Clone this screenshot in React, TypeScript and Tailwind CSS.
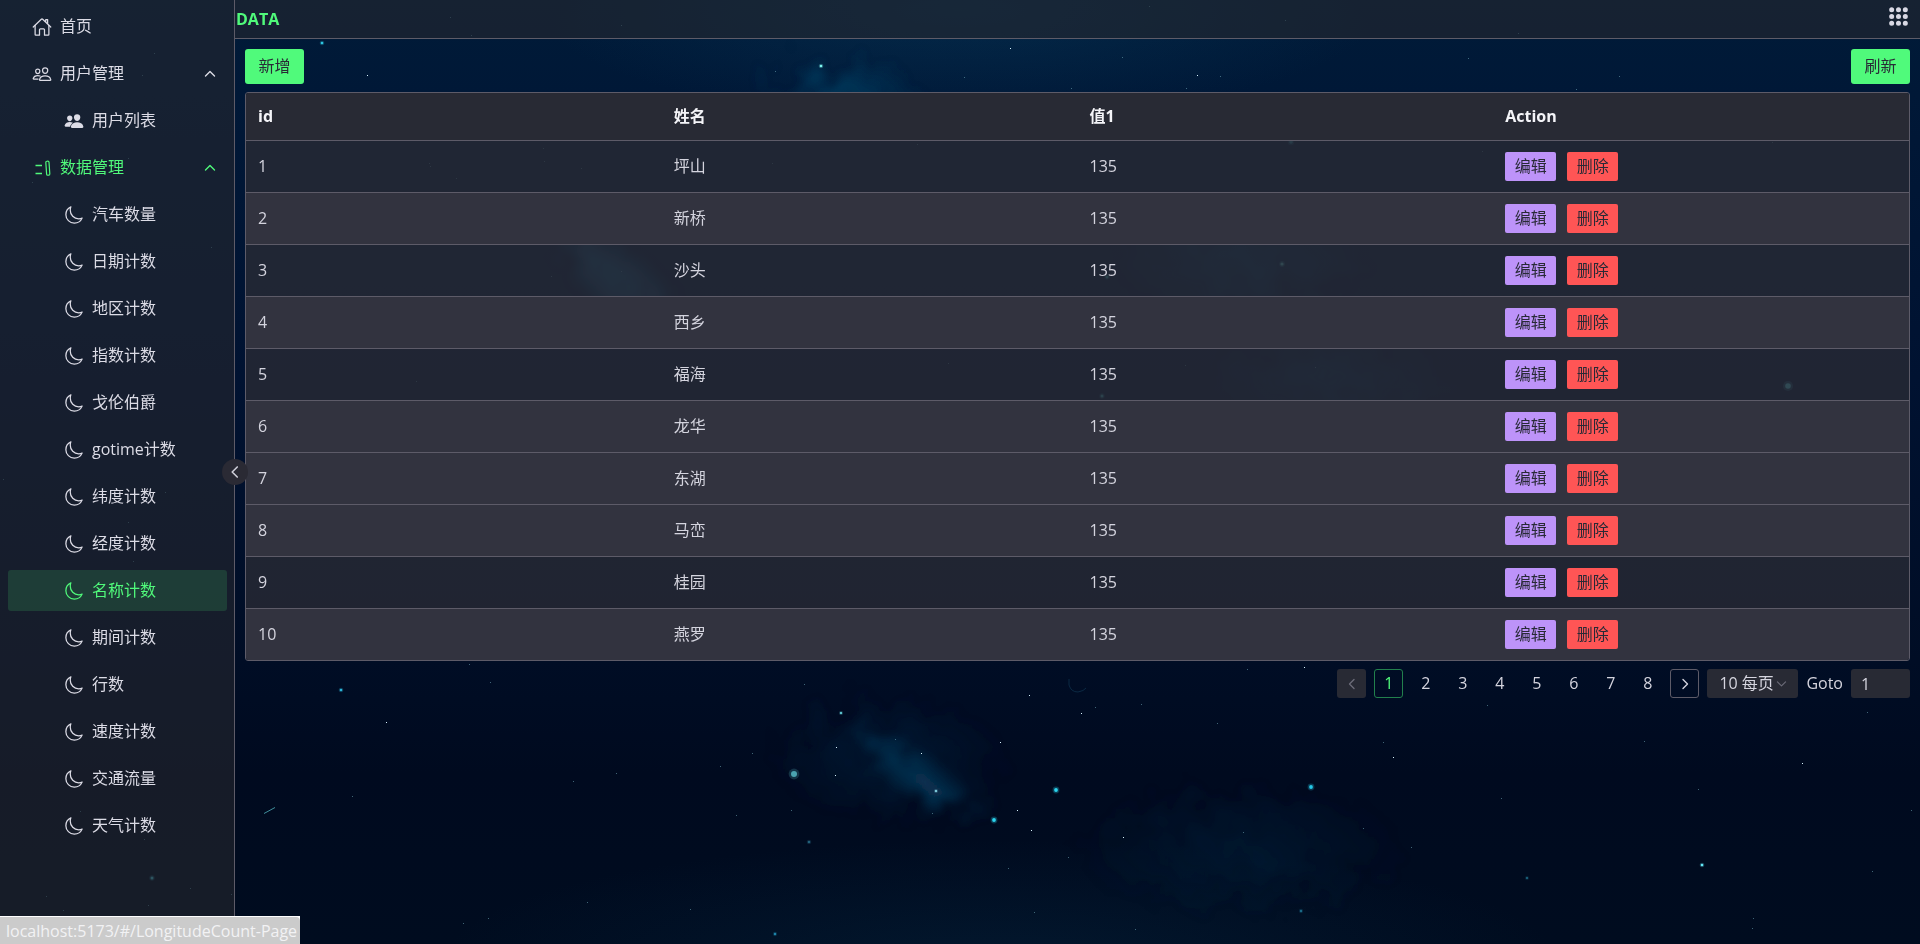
import { useState } from "react";
import type { ReactNode } from "react";
import {
  IoApps,
  IoHomeOutline,
  IoMoonOutline,
  IoPeople,
  IoPeopleOutline,
} from "react-icons/io5";

const counters = [
  "汽车数量",
  "日期计数",
  "地区计数",
  "指数计数",
  "戈伦伯爵",
  "gotime计数",
  "纬度计数",
  "经度计数",
  "名称计数",
  "期间计数",
  "行数",
  "速度计数",
  "交通流量",
  "天气计数",
];

const names = ["坪山", "新桥", "沙头", "西乡", "福海", "龙华", "东湖", "马峦", "桂园", "燕罗"];
const solidRows = new Set([2, 4, 6, 7, 8, 10]);
const columns = ["id", "姓名", "值1", "Action"];
const pages = [1, 2, 3, 4, 5, 6, 7, 8];

// x, y, radius, colour
type Star = [number, number, number, string];
const brightStars: Star[] = [
  [322, 43, 1.3, "#2cc4e0"],
  [341, 690, 1.3, "#2cb4d8"],
  [821, 66, 1.3, "#7df5f0"],
  [841, 713, 1.1, "#6be0e8"],
  [794, 774, 3, "#4aa3b0"],
  [994, 820, 1.9, "#2bd4ee"],
  [1056, 790, 1.9, "#2bd4ee"],
  [1311, 787, 1.9, "#25c8e8"],
  [1702, 865, 1.3, "#63e6f5"],
  [775, 934, 1.2, "#1f87ad"],
  [1301, 911, 1.2, "#1b6c8a"],
  [809, 842, 1.3, "#22607a"],
  [1527, 878, 1.1, "#1d6a85"],
  [1282, 264, 1.6, "#4fb5b8"],
  [1107, 277, 1.5, "#3b9aa5"],
  [1102, 396, 1.5, "#3b9aa5"],
  [1788, 386, 2.8, "#4fc0cc"],
  [1291, 142, 1.8, "#2b7f92"],
  [152, 878, 1.5, "#3e9db0"],
  [936, 791, 1.1, "#8fe3f2"],
];

const whiteStars: [number, number][] = [
  [367, 75], [386, 722], [1010, 48], [1081, 713], [1197, 75], [836, 747],
  [835, 775], [1393, 757], [1304, 667], [921, 753], [1017, 810], [1031, 830],
  [1123, 837], [1029, 695], [1000, 742], [1802, 763],
];

const dimStars: [number, number][] = [
  [1122, 57], [1071, 88], [1186, 88], [964, 77], [775, 71], [772, 163], [917, 144],
  [1149, 6], [1285, 20], [450, 17], [471, 35], [429, 163], [456, 178], [621, 25],
  [1468, 58], [1576, 89], [1619, 76], [1518, 33], [1220, 76], [621, 271], [551, 276],
  [948, 363], [1315, 367], [1185, 365], [416, 381], [154, 53], [142, 75], [128, 158],
  [32, 182], [3, 479], [211, 247], [165, 492], [128, 522], [133, 561], [103, 546],
  [463, 923], [469, 664], [490, 682], [573, 781], [616, 773], [720, 766], [736, 815],
  [587, 902], [690, 909], [488, 918], [352, 796], [1217, 723], [1243, 832],
  [1135, 929], [1034, 912], [895, 739], [752, 753], [804, 684], [1247, 669],
  [1141, 704], [1095, 707], [1068, 857], [1008, 868], [791, 810], [932, 813],
  [1752, 928], [1753, 918], [1501, 798], [1363, 828], [1411, 847], [1383, 742],
  [1487, 705], [1867, 712], [1872, 871], [1644, 741], [1698, 789], [1911, 810],
  [80, 811], [144, 839], [190, 888], [231, 894], [46, 896], [63, 910], [148, 905],
  [430, 166], [543, 148], [544, 161], [581, 168], [1482, 151], [1772, 142],
];

function NightSky() {
  return (
    <svg
      className="absolute inset-0 h-full w-full"
      viewBox="0 0 1920 944"
      preserveAspectRatio="none"
      aria-hidden="true"
    >
      <defs>
        <linearGradient id="sky" x1="0" y1="0" x2="0" y2="1">
          <stop offset="0" stopColor="#001b38" />
          <stop offset="0.1" stopColor="#001837" />
          <stop offset="0.4" stopColor="#001231" />
          <stop offset="0.7" stopColor="#000d25" />
          <stop offset="0.82" stopColor="#000a1f" />
          <stop offset="1" stopColor="#000c1f" />
        </linearGradient>
        <radialGradient id="glow">
          <stop offset="0" stopColor="#0b4468" stopOpacity="1" />
          <stop offset="1" stopColor="#0b4468" stopOpacity="0" />
        </radialGradient>
        <filter id="cloud" x="-30%" y="-30%" width="160%" height="160%">
          <feTurbulence type="fractalNoise" baseFrequency="0.04" numOctaves="5" seed="7" result="noise" />
          <feDisplacementMap in="SourceGraphic" in2="noise" scale="60" />
          <feGaussianBlur stdDeviation="3" />
        </filter>
      </defs>
      <rect width="1920" height="944" fill="url(#sky)" />
      <ellipse cx="960" cy="10" rx="420" ry="110" fill="url(#glow)" opacity="0.35" />
      <ellipse cx="1000" cy="960" rx="560" ry="120" fill="url(#glow)" opacity="0.2" />
      <g filter="url(#cloud)">
        <ellipse cx="845" cy="98" rx="80" ry="42" fill="url(#glow)" opacity="0.7" />
        <ellipse cx="618" cy="280" rx="75" ry="38" fill="url(#glow)" transform="rotate(38 618 280)" />
        <ellipse cx="618" cy="280" rx="60" ry="28" fill="url(#glow)" transform="rotate(38 618 280)" />
        <ellipse cx="1240" cy="260" rx="130" ry="60" fill="url(#glow)" opacity="0.5" />
        <ellipse cx="1330" cy="380" rx="120" ry="50" fill="url(#glow)" opacity="0.4" />
        <ellipse cx="920" cy="778" rx="75" ry="26" fill="url(#glow)" opacity="0.65" transform="rotate(34 920 778)" />
        <ellipse cx="890" cy="760" rx="120" ry="65" fill="url(#glow)" opacity="0.25" />
        <ellipse cx="1240" cy="850" rx="170" ry="65" fill="url(#glow)" opacity="0.2" />
      </g>
      {dimStars.map(([x, y]) => (
        <rect key={`${x}-${y}`} x={x} y={y} width="1" height="1" fill="#6aa2b0" opacity="0.6" />
      ))}
      {whiteStars.map(([x, y]) => (
        <rect key={`${x}-${y}`} x={x} y={y} width="1" height="1" fill="#d8f4ff" />
      ))}
      {brightStars.map(([x, y, r, fill]) => (
        <g key={`${x}-${y}`} fill={fill}>
          <circle cx={x} cy={y} r={r * 1.8} opacity="0.25" />
          <circle cx={x} cy={y} r={r} />
        </g>
      ))}
      <path d="M264 813.500L275 807.500" stroke="#3f8f9c" strokeWidth="1" />
      <path d="M1069 679V685Q1071 692 1078 692Q1084 691 1086 688" fill="none" stroke="#0b2a44" strokeWidth="1" />
    </svg>
  );
}

function DataIcon() {
  return (
    <svg className="size-5 shrink-0" viewBox="0 0 20 20" fill="none" stroke="currentColor" aria-hidden="true">
      <path d="M3.500 7.500H10M3.500 15.500H10" strokeWidth="1.300" />
      <rect x="14.200" y="3.200" width="3.200" height="14" rx="1.200" strokeWidth="1.200" transform="rotate(-4 16 10)" />
    </svg>
  );
}

function Chevron({ d, className }: { d: string; className: string }) {
  return (
    <svg
      className={className}
      viewBox="0 0 16 16"
      fill="none"
      stroke="currentColor"
      strokeWidth="1.400"
      strokeLinecap="round"
      strokeLinejoin="round"
      aria-hidden="true"
    >
      <path d={d} />
    </svg>
  );
}

const UP = "M3.500 10L8 5.500L12.500 10";
const DOWN = "M3 6L8 11L13 6";
const LEFT = "M10 3.500L5.500 8L10 12.500";
const RIGHT = "M6 3.500L10.500 8L6 12.500";

function MenuGroup({ icon, label, active }: { icon: ReactNode; label: string; active?: boolean }) {
  return (
    <button
      type="button"
      aria-expanded="true"
      className={`flex h-[41px] w-full items-center gap-2 rounded-[3px] pr-[9px] pl-6 text-left ${
        active ? "text-[#50fa7b]" : "text-[#dcdce6]"
      }`}
    >
      {icon}
      <span className="flex-1 pb-0.5">{label}</span>
      <Chevron d={UP} className="size-4" />
    </button>
  );
}

function MenuLink({
  icon,
  label,
  nested,
  active,
}: {
  icon: ReactNode;
  label: string;
  nested?: boolean;
  active?: boolean;
}) {
  return (
    <a
      href="#"
      aria-current={active ? "page" : undefined}
      className={`flex h-[41px] items-center gap-2 rounded-[3px] ${nested ? "pl-14" : "pl-6"} ${
        active ? "bg-[#50fa7b]/15 text-[#50fa7b]" : "text-[#dcdce6]"
      }`}
    >
      {icon}
      <span className="pb-0.5">{label}</span>
    </a>
  );
}

function Sidebar() {
  return (
    <aside className="relative w-[235px] shrink-0 border-r border-[#5d5b68] bg-[#24262f]/62">
      <nav className="flex flex-col gap-1.5 px-2 pt-1.5 pr-[7px]">
        <MenuLink icon={<IoHomeOutline className="size-5" />} label="首页" />
        <MenuGroup icon={<IoPeopleOutline className="size-5" />} label="用户管理" />
        <MenuLink icon={<IoPeople className="size-5" />} label="用户列表" nested />
        <MenuGroup icon={<DataIcon />} label="数据管理" active />
        {counters.map((label) => (
          <MenuLink
            key={label}
            icon={<IoMoonOutline className="size-5" />}
            label={label}
            nested
            active={label === "名称计数"}
          />
        ))}
      </nav>
      <button
        type="button"
        aria-label="收起菜单"
        className="absolute top-1/2 -right-3.5 z-10 flex size-[26px] -translate-y-1/2 items-center justify-center rounded-full bg-[#2a2a34] text-[#d0d0da]"
      >
        <Chevron d={LEFT} className="size-[18px]" />
      </button>
    </aside>
  );
}

function DataTable() {
  return (
    <div className="overflow-hidden rounded-[3px] border border-[#5d5b68]">
      <table className="w-full table-fixed border-separate border-spacing-0 text-left">
        <thead>
          <tr className="bg-[#282a34] text-[#f4f4f8]">
            {columns.map((c) => (
              <th key={c} className="h-12 border-b border-[#5d5b68] px-3 pt-0 pb-0.5 font-bold">
                {c}
              </th>
            ))}
          </tr>
        </thead>
        <tbody className="[&>tr:last-child>td]:h-[51px] [&>tr:last-child>td]:border-b-0">
          {names.map((name, i) => (
            <tr
              key={name}
              className={`text-[#d4d4de] ${solidRows.has(i + 1) ? "bg-[#32333f]" : "bg-[#282a34]/80"}`}
            >
              <td className="h-[52px] border-b border-[#5d5b68] px-3 pt-0 pb-0.5">{i + 1}</td>
              <td className="h-[52px] border-b border-[#5d5b68] px-3 pt-0 pb-0.5">{name}</td>
              <td className="h-[52px] border-b border-[#5d5b68] px-3 pt-0 pb-0.5">135</td>
              <td className="h-[52px] border-b border-[#5d5b68] px-3 py-0">
                <div className="flex gap-[11px] text-[#282a36]">
                  <button type="button" className="h-[29px] w-[51px] rounded-[2px] bg-[#bd93f9] pb-0.5">
                    编辑
                  </button>
                  <button type="button" className="h-[29px] w-[51px] rounded-[2px] bg-[#ff5555] pb-0.5">
                    删除
                  </button>
                </div>
              </td>
            </tr>
          ))}
        </tbody>
      </table>
    </div>
  );
}

function Pagination() {
  const [target, setTarget] = useState("1");
  return (
    <div className="flex items-center justify-end gap-2 text-[#d4d4de]">
      <button
        type="button"
        disabled
        aria-label="上一页"
        className="flex size-[29px] items-center justify-center rounded-[3px] bg-[#282a34] text-[#6b6b78]"
      >
        <Chevron d={LEFT} className="size-4" />
      </button>
      {pages.map((p) => (
        <button
          key={p}
          type="button"
          aria-current={p === 1 ? "page" : undefined}
          className={`flex size-[29px] items-center justify-center rounded-[3px] border pb-0.5 ${
            p === 1 ? "border-[#22804d] text-[#50fa7b]" : "border-transparent"
          }`}
        >
          {p}
        </button>
      ))}
      <button
        type="button"
        aria-label="下一页"
        className="flex size-[29px] items-center justify-center rounded-[3px] border border-[#5d5b68]"
      >
        <Chevron d={RIGHT} className="size-4" />
      </button>
      <div className="relative h-[29px] w-[91px]">
        <select
          aria-label="每页条数"
          className="h-full w-full appearance-none rounded-[3px] bg-[#282a34] pb-0.5 pl-3 outline-none"
        >
          <option>10 每页</option>
        </select>
        <Chevron
          d={DOWN}
          className="pointer-events-none absolute top-2 right-2.5 size-[13px] text-[#6b6b78]"
        />
      </div>
      <label htmlFor="goto-page" className="pb-0.5">
        Goto
      </label>
      <input
        id="goto-page"
        value={target}
        onChange={(e) => setTarget(e.target.value)}
        className="h-[29px] w-[59px] rounded-[3px] bg-[#282a34] px-2.5 outline-none"
      />
    </div>
  );
}

export default function App() {
  return (
    <div className="relative flex min-h-screen overflow-hidden bg-[#000d25] font-['Open_Sans','Noto_Sans_CJK_SC',sans-serif] text-base leading-6">
      <NightSky />
      <Sidebar />
      <div className="relative flex min-w-0 flex-1 flex-col">
        <header className="flex h-[39px] items-center justify-between border-b border-[#5d5b68] bg-[#24262f]/62 pr-2.5 pl-px">
          <h1 className="text-base font-bold text-[#50fa7b]">DATA</h1>
          <button type="button" aria-label="应用" className="mb-1.5 text-[#d8d8e4]">
            <IoApps className="size-[23px]" />
          </button>
        </header>
        <main className="flex flex-col gap-2 p-2.5">
          <div className="flex justify-between text-[#282a36]">
            <button type="button" className="h-[35px] w-[59px] rounded-[3px] bg-[#50fa7b] pb-0.5">
              新增
            </button>
            <button type="button" className="h-[35px] w-[59px] rounded-[3px] bg-[#50fa7b] pb-0.5">
              刷新
            </button>
          </div>
          <DataTable />
          <Pagination />
        </main>
      </div>
      <div className="absolute bottom-0 left-0 z-20 bg-white pt-px">
        <div className="flex h-[27px] w-[300px] items-center rounded-tr-[4px] bg-[#cbcbcb] pl-1.5 whitespace-nowrap text-[#f2f2f4]">
          localhost:5173/#/LongitudeCount-Page
        </div>
      </div>
    </div>
  );
}
